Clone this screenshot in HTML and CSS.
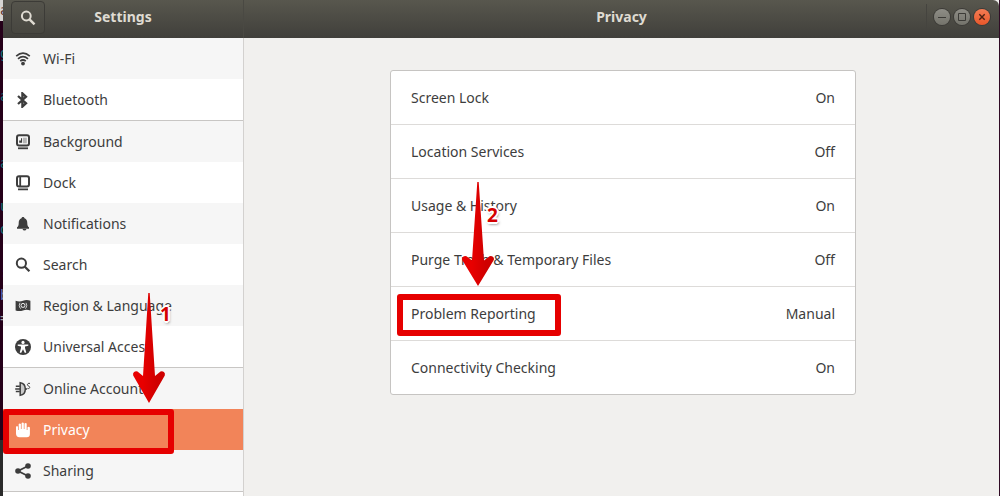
FILE: index.html
```html
<!DOCTYPE html>
<html lang="en">
<head>
    <meta charset="UTF-8">
    <meta name="viewport" content="width=device-width, initial-scale=1.0">
    <title>Settings - Privacy</title>
    <link rel="stylesheet" href="styles.css">
</head>
<body>

    <!-- terminal behind the window -->
    <div class="terminal" aria-hidden="true">
        <div class="terminal-bar">a</div>
        <div class="terminal-text">
            <span>g</span>
            <span>a</span>
            <span class="gap">a</span>
            <span>u</span>
            <span class="near">o</span>
            <span class="light">:</span>
            <span class="blue">b</span>
            <span class="light near">=</span>
        </div>
        <div class="terminal-end"></div>
    </div>

    <div class="window">
        <header class="titlebar">
            <div class="title-left">
                <button class="search-btn" aria-label="Search">
                    <svg width="16" height="16" viewBox="0 0 16 16" fill="none" stroke="currentColor"><circle cx="6.3" cy="6" r="4.4" stroke-width="2"/><path d="M9.5 9.3L14.5 14.3" stroke-width="2.4"/></svg>
                </button>
                <h2>Settings</h2>
            </div>
            <div class="title-right">
                <h1>Privacy</h1>
                <div class="window-btns">
                    <button class="win-btn" aria-label="Minimize"><svg width="16" height="16" viewBox="0 0 16 16"><path d="M4 8.5h8"/></svg></button>
                    <button class="win-btn" aria-label="Maximize"><svg width="16" height="16" viewBox="0 0 16 16"><path d="M4.5 4.5h7v7h-7z"/></svg></button>
                    <button class="win-btn close" aria-label="Close"><svg width="16" height="16" viewBox="0 0 16 16"><path d="M5.3 5.3l5.4 5.4M10.7 5.3l-5.4 5.4"/></svg></button>
                </div>
            </div>
        </header>

        <div class="content">
            <nav class="sidebar">
                <a href="#" class="item shade">
                    <svg class="icon" viewBox="0 0 16 16" fill="none" stroke="currentColor"><path d="M1.2 5.2Q8-.8 14.8 5.2" stroke-width="1.7"/><path d="M3 7.8Q8 3.4 13 7.8" stroke-width="1.7"/><path d="M5.2 10.2Q8 7.8 10.8 10.2" stroke-width="1.7"/><circle cx="8" cy="12.6" r="1.9" fill="currentColor" stroke="none"/></svg>
                    Wi-Fi
                </a>
                <a href="#" class="item">
                    <svg class="icon" viewBox="0 0 16 16" fill="none" stroke="currentColor"><path d="M3 4L11 11.2L7.4 14.6V1.4L11 4.8L3 12" stroke-width="2.3"/></svg>
                    Bluetooth
                </a>
                <hr>
                <a href="#" class="item shade">
                    <svg class="icon" viewBox="0 0 16 16" fill="none" stroke="currentColor"><rect x="2" y="1.2" width="12" height="10.4" rx="2" stroke-width="2"/><path d="M3 14.3h10" stroke-width="1.8"/><path d="M4.2 8.8V6.6H6V4.3h1.1v4.5z" fill="currentColor" stroke="none"/><path d="M8 3.7h3.8v5.6H8z" fill="#b5b5b5" stroke="none"/></svg>
                    Background
                </a>
                <a href="#" class="item">
                    <svg class="icon" viewBox="0 0 16 16" fill="none" stroke="currentColor"><rect x="2" y="1.2" width="12" height="10.4" rx="2" stroke-width="2"/><path d="M5.2 2v9M3 14.3h10" stroke-width="1.8"/></svg>
                    Dock
                </a>
                <a href="#" class="item shade">
                    <svg class="icon" viewBox="0 0 16 16" fill="currentColor"><path d="M8 1C9 1 9.4 1.7 9.5 2.3C11.7 3 12.3 5 12.3 7.2C12.3 9.6 12.8 10.4 14 11.3V12.7H2V11.3C3.2 10.4 3.7 9.6 3.7 7.2C3.7 5 4.3 3 6.5 2.3C6.6 1.7 7 1 8 1zM7.5 13h4q-.5 1.5-2 1.5t-2-1.5"/></svg>
                    Notifications
                </a>
                <a href="#" class="item">
                    <svg class="icon" viewBox="0 0 16 16" fill="none" stroke="currentColor"><circle cx="6.4" cy="6.2" r="4.6" stroke-width="2"/><path d="M9.6 9.5L14.4 14.2" stroke-width="2.3"/></svg>
                    Search
                </a>
                <a href="#" class="item shade">
                    <svg class="icon" viewBox="0 0 16 16" fill="currentColor"><path d="M.6 2.7Q4.5 4.1 8 2.7T15.4 2.7V12.4Q11.5 11.2 8 12.4T.6 12.4z"/><g fill="none" stroke="#f0f0f0"><circle cx="8" cy="7.4" r="2" stroke-width="1"/><path d="M5 4.8Q3.4 7.4 5 10M11 4.8Q12.6 7.4 11 10M6.2 9.7l-.8 1M9.8 9.7l.8 1" stroke-width=".8"/></g></svg>
                    Region &amp; Language
                </a>
                <a href="#" class="item">
                    <svg class="icon" viewBox="0 0 16 16"><circle cx="8" cy="8" r="8" fill="currentColor"/><circle cx="8" cy="3.4" r="1.6" fill="#fff"/><path d="M2.7 5.4L6 5.5H10L13.3 5.4V6.7L10 7.5V9L11.3 13.4L9.9 13.9L8 10.2L6.1 13.9L4.7 13.4L6 9V7.5L2.7 6.7z" fill="#fff"/></svg>
                    Universal Access
                </a>
                <hr>
                <a href="#" class="item shade">
                    <svg class="icon" viewBox="0 0 16 16" fill="none" stroke="currentColor"><path d="M5.2 1.7V14.3C12 13.5 12 2.5 5.2 1.7z" fill="#c9c9c9" stroke-width="1.5"/><path d="M.8 5.2h4M.8 10.5h4M.2 7.9h5M10.3 8h1.8" stroke-width="1.5"/><path d="M15 2.4C12.3 1.7 11.7 4.4 13.4 4.9C15.5 5.5 15 8.3 12.5 7.4" stroke-width="1"/></svg>
                    Online Accounts
                </a>
                <a href="#" class="item selected" aria-current="page">
                    <svg class="icon" viewBox="0 0 16 16" fill="currentColor"><path d="M1 4.6q1-.8 2 0V8h.7V2q1.1-.9 2.2 0v5h.7V.9q1.1-.9 2.2 0V7h.7V1.5q1.1-.9 2.2 0V8h.8V5.3q1.3-1 2.4.1V12Q14.8 15.2 11.8 15.2H4.5Q1 15.2 1 11.5z"/></svg>
                    Privacy
                    <span class="mark"></span>
                    <svg class="arrow" width="34" height="112" viewBox="0 0 34 112"><use href="#arrow-shape"/></svg>
                    <b class="step">1</b>
                </a>
                <a href="#" class="item shade">
                    <svg class="icon" viewBox="0 0 16 16" fill="currentColor"><path d="M13 3L3 8l10 5" fill="none" stroke="currentColor" stroke-width="1.8"/><circle cx="13" cy="3" r="2.8"/><circle cx="3" cy="8" r="2.8"/><circle cx="13" cy="13" r="2.8"/></svg>
                    Sharing
                </a>
                <hr>
            </nav>

            <main class="page">
                <div class="panel">
                    <button class="row"><span>Screen Lock</span><span>On</span></button>
                    <button class="row"><span>Location Services</span><span>Off</span></button>
                    <button class="row"><span>Usage &amp; History</span><span>On</span></button>
                    <button class="row"><span>Purge Trash &amp; Temporary Files</span><span>Off</span></button>
                    <button class="row problem">
                        <span>Problem Reporting</span><span>Manual</span>
                        <span class="mark"></span>
                        <svg class="arrow" width="34" height="106" viewBox="0 0 34 112" preserveAspectRatio="none"><use href="#arrow-shape"/></svg>
                        <b class="step">2</b>
                    </button>
                    <button class="row"><span>Connectivity Checking</span><span>On</span></button>
                </div>
            </main>
        </div>
    </div>

    <svg width="0" height="0" class="defs" aria-hidden="true">
        <defs>
            <linearGradient id="red" x1="0" x2="1" y1="0" y2="0">
                <stop offset="0.3" stop-color="#e80000"/>
                <stop offset="0.75" stop-color="#cf0000"/>
            </linearGradient>
            <path id="arrow-shape" fill="url(#red)" d="M16.3 1H17.7L23 84L28.5 79.4A3.3 3.3 0 0 1 32.8 83.5L17 111L1.2 83.5A3.3 3.3 0 0 1 5.5 79.4L11 84z"/>
        </defs>
    </svg>

</body>
</html>
```
FILE: styles.css
```css
* {
    box-sizing: border-box;
}
body {
    margin: 0;
    height: 100vh;
    display: flex;
    overflow: hidden;
    background: #300a24;
    font-family: "Noto Sans", "Open Sans", sans-serif;
    font-size: 14px;
    line-height: 20px;
    color: #3d3d3d;
}
button {
    font: inherit;
    color: inherit;
    border: none;
    padding: 0;
    cursor: pointer;
}
h1, h2 {
    margin: 0;
    font-size: 14px;
    font-weight: bold;
}

/* terminal strip */
.terminal {
    width: 3px;
    flex: none;
    display: flex;
    flex-direction: column;
    overflow: hidden;
    background: #250019;
    font-family: "DejaVu Sans Mono", monospace;
    color: #0d6f78;
}
.terminal-bar {
    height: 21px;
    background: #d6d4d2;
    color: #5a3030;
}
.terminal-text {
    flex: 1;
    display: flex;
    flex-direction: column;
    gap: 23px;
    padding-top: 22px;
}
.terminal-text .gap {
    margin-top: 24px;
}
.terminal-text .near {
    margin-top: -20px;
}
.terminal-text .light {
    color: #a0a0a0;
}
.terminal-text .blue {
    margin-top: -20px;
    color: #6b78b8;
}
.terminal-end {
    height: 56px;
    background: #2b2b2b;
}

/* window */
.window {
    flex: 1;
    display: flex;
    flex-direction: column;
    margin-right: 1px;
    background: #f1f0ee;
}
.titlebar {
    display: flex;
    height: 38px;
    flex: none;
    background: linear-gradient(#58574e, #403f3b);
    color: #dfdbd2;
    border-radius: 0 6px 0 0;
}
.title-left {
    width: 241px;
    flex: none;
    position: relative;
    display: flex;
    justify-content: center;
    padding-top: 7px;
    border-right: 1px solid #4a4943;
}
.search-btn {
    position: absolute;
    left: 8px;
    top: 1px;
    width: 34px;
    height: 33px;
    display: flex;
    align-items: center;
    justify-content: center;
    background: linear-gradient(#55544c, #474640);
    border: 1px solid #3c3b37;
    border-radius: 4px;
}
.title-right {
    flex: 1;
    position: relative;
    display: flex;
    justify-content: center;
    padding-top: 7px;
}
.window-btns {
    position: absolute;
    right: 9px;
    top: 4px;
    height: 26px;
    display: flex;
    align-items: center;
    gap: 4px;
    padding-left: 7px;
    border-left: 1px solid #45443f;
}
.win-btn {
    width: 16px;
    height: 16px;
    display: flex;
    border-radius: 50%;
    background: linear-gradient(#8e8d86, #74736b);
    box-shadow: 0 0 0 1px #3c3b37;
}
.win-btn svg {
    fill: none;
    stroke: #3c3b37;
    stroke-width: 1;
}
.win-btn.close {
    background: linear-gradient(#f47c54, #e9572a);
}
.win-btn.close svg {
    stroke: #4b2112;
    stroke-width: 1.4;
}
.content {
    flex: 1;
    display: flex;
    min-height: 0;
}

/* sidebar */
.sidebar {
    width: 241px;
    flex: none;
    background: #fff;
    border-right: 1px solid #d3d1cf;
}
.sidebar hr {
    height: 1px;
    margin: 0;
    border: none;
    background: #c8c6c4;
}
.item {
    position: relative;
    display: flex;
    align-items: center;
    gap: 12px;
    height: 41px;
    padding-left: 12px;
    color: #3d3d3d;
    text-decoration: none;
}
.item.shade {
    background: #f6f6f6;
}
.item.selected {
    background: #f28459;
    color: #fff;
}
.icon {
    width: 16px;
    height: 16px;
    flex: none;
}

/* privacy list */
.page {
    flex: 1;
    padding: 32px 0 0 3px;
}
.panel {
    width: 62%;
    max-width: 466px;
    margin: 0 auto;
    background: #fff;
    border: 1px solid #c6c4c2;
    border-radius: 3px;
}
.row {
    position: relative;
    display: flex;
    align-items: center;
    justify-content: space-between;
    width: 100%;
    height: 54px;
    padding: 0 20px;
    background: none;
    border-bottom: 1px solid #dddbd9;
}
.row:last-child {
    height: 53px;
    border-bottom: none;
}

/* red step marks drawn over the rows */
.mark, .arrow, .step {
    position: absolute;
    z-index: 2;
}
.mark {
    border: 6px solid #e60000;
    border-radius: 3px;
}
.item .mark {
    left: 0;
    top: 0;
    width: 171px;
    height: 45px;
}
.item .arrow {
    left: 129px;
    bottom: 46px;
}
.row .mark {
    left: 6px;
    top: 7px;
    width: 164px;
    height: 42px;
}
.row .arrow {
    left: 70px;
    bottom: 53px;
}
.step {
    font-family: "Open Sans", "Noto Sans", sans-serif;
    font-size: 19px;
    color: #d40000;
    text-shadow: 1px 1px #fff, -1px -1px #fff, 1px -1px #fff, -1px 1px #fff,
        2px 0 #fff, -2px 0 #fff, 0 2px #fff, 0 -2px #fff, 1px 2px 3px #555;
}
.item .step {
    left: 157px;
    bottom: 126px;
}
.row .step {
    left: 96px;
    bottom: 115px;
}
.defs {
    position: absolute;
}
```
